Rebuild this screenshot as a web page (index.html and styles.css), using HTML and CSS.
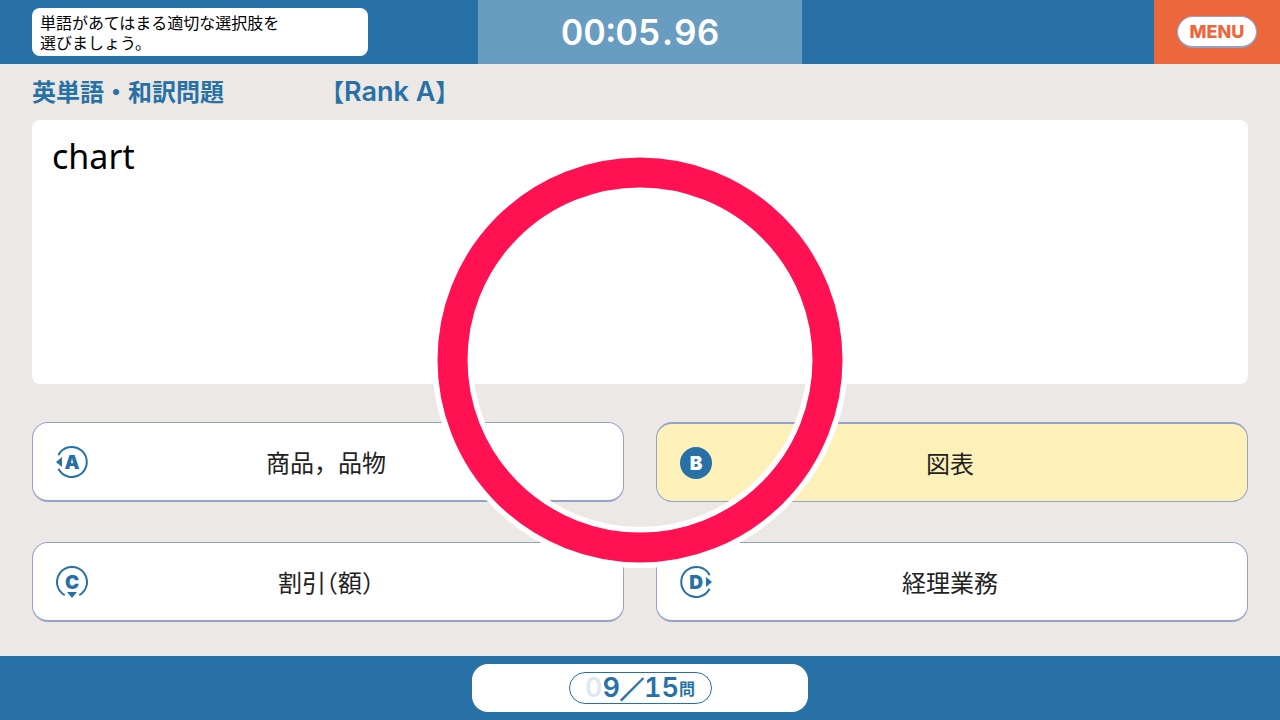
FILE: index.html
```html
<!DOCTYPE html>
<html lang="ja">
<head>
  <meta charset="utf-8">
  <title>英単語・和訳問題</title>
  <meta name="viewport" content="width=device-width, initial-scale=1">
  <link rel="stylesheet" href="styles.css">
</head>
<body>
  <header class="top">
    <div class="top-left">
      <p class="guide">単語があてはまる適切な選択肢を<br>選びましょう。</p>
    </div>
    <div class="timer">00:05<span class="dot">.</span>96</div>
    <div class="menu-box">
      <button class="menu" type="button">MENU</button>
    </div>
  </header>

  <main class="quiz">
    <div class="title">
      <h1>英単語・和訳問題</h1>
      <span class="rank"><span class="half">【</span>Rank A<span class="half">】</span></span>
    </div>
    <div class="question">chart</div>
    <div class="answers">
      <button class="answer" type="button">
        <svg class="key" viewBox="0 0 32 32" aria-hidden="true">
          <path class="arc" d="M2.4 9.2A15 15 0 1 1 2.4 22.8"/>
          <path class="arrow" d="M0 16l6-5v10z"/>
          <text x="16" y="23">A</text>
        </svg>
        <span class="label">商品，品物</span>
      </button>
      <button class="answer selected" type="button">
        <svg class="key" viewBox="0 0 32 32" aria-hidden="true">
          <circle class="disc" cx="16" cy="16" r="16"/>
          <text x="16" y="23">B</text>
        </svg>
        <span class="label">図表</span>
      </button>
      <button class="answer" type="button">
        <svg class="key" viewBox="0 0 32 32" aria-hidden="true">
          <path class="arc" d="M8.8 29.2A15 15 0 1 1 23.2 29.2"/>
          <path class="arrow" d="M11 26h10l-5 6z"/>
          <text x="16" y="23">C</text>
        </svg>
        <span class="label">割引<span class="half">（</span>額<span class="half">）</span></span>
      </button>
      <button class="answer" type="button">
        <svg class="key" viewBox="0 0 32 32" aria-hidden="true">
          <path class="arc" d="M29.6 9.2A15 15 0 1 0 29.6 22.8"/>
          <path class="arrow" d="M32 16l-6-5v10z"/>
          <text x="16" y="23">D</text>
        </svg>
        <span class="label">経理業務</span>
      </button>
    </div>

    <!-- correct answer mark -->
    <svg class="mark" viewBox="0 0 416 416" role="img" aria-label="正解">
      <circle class="mark-shadow" cx="208" cy="208" r="187.5"/>
      <circle class="mark-ring" cx="208" cy="208" r="187.5"/>
    </svg>
  </main>

  <footer class="bottom">
    <div class="progress">
      <div class="count"><span class="zero">0</span><span>9</span><span class="slash">／</span><span>15</span><span class="unit">問</span></div>
    </div>
  </footer>
</body>
</html>
```

FILE: styles.css
```css
* {
  box-sizing: border-box;
}
body {
  margin: 0;
  min-height: 100vh;
  display: flex;
  flex-direction: column;
  background-color: #ece8e5;
  font-family: "Noto Sans CJK JP", sans-serif;
}
button {
  font-family: inherit;
  cursor: pointer;
}

/* header */
.top {
  display: grid;
  grid-template-columns: 1fr 324px 1fr;
  height: 64px;
  background-color: #2871a6;
}
.top-left {
  padding: 8px 0 8px 32px;
}
.guide {
  max-width: 336px;
  height: 48px;
  margin: 0;
  padding: 4px 8px;
  border-radius: 8px;
  background-color: white;
  color: black;
  font-size: 16px;
  line-height: 20px;
}
.timer {
  background-color: #699cc1;
  color: white;
  font-family: Inter, sans-serif;
  font-size: 35px;
  font-weight: 600;
  font-variant-numeric: tabular-nums;
  line-height: 64px;
  text-align: center;
}
.dot {
  padding: 0 2px;
}
.menu-box {
  display: flex;
  justify-content: center;
  align-items: center;
  justify-self: end;
  width: 126px;
  background-color: #ec673c;
}
.menu {
  width: 80px;
  height: 32px;
  padding: 0;
  border: 1px solid #93a3c8;
  border-bottom-width: 2px;
  border-radius: 16px;
  background-color: white;
  color: #ec673c;
  font-family: Inter, sans-serif;
  font-size: 18px;
  font-weight: 800;
}

/* question */
.quiz {
  position: relative;
  flex: 1;
  display: flex;
  flex-direction: column;
  padding: 0 32px 34px;
}
.title {
  display: flex;
  align-items: center;
  gap: 108px;
  height: 56px;
  padding-bottom: 4px;
  color: #2871a6;
}
.title h1 {
  margin: 0;
  font-size: 24px;
  font-weight: 700;
}
.rank {
  font-family: Inter, "Noto Sans CJK JP", sans-serif;
  font-size: 27px;
  font-weight: 600;
}
.half {
  font-feature-settings: "halt";
}
.rank .half {
  font-size: 24px;
  font-weight: 700;
}
.question {
  flex: 1;
  min-height: 264px;
  padding: 12px 20px;
  border-radius: 8px;
  background-color: white;
  color: black;
  font-family: "Noto Sans", sans-serif;
  font-size: 34px;
  line-height: 48px;
}

/* answers */
.answers {
  display: grid;
  grid-template-columns: 1fr 1fr;
  gap: 40px 32px;
  margin-top: 38px;
}
.answer {
  display: grid;
  grid-template-columns: 32px 1fr 32px;
  align-items: center;
  height: 80px;
  padding: 0 27px 0 23px;
  border: 1px solid #93a3c8;
  border-bottom-width: 2px;
  border-radius: 16px;
  background-color: white;
  color: #222;
  font-size: 24px;
}
.selected {
  border-width: 2px 1px 1px;
  background-color: #fdf0b8;
}
.label {
  line-height: 32px;
  text-align: center;
}
.key {
  width: 32px;
  height: 32px;
  fill: #2871a6;
}
.key text {
  font-family: Inter, sans-serif;
  font-size: 19px;
  font-weight: 900;
  text-anchor: middle;
}
.arc {
  fill: none;
  stroke: #2871a6;
  stroke-width: 2;
}
.selected text {
  fill: white;
}

.mark {
  position: absolute;
  top: 50%;
  left: 50%;
  width: 416px;
  height: 416px;
  transform: translate(-50%, -50%);
  pointer-events: none;
}
.mark circle {
  fill: none;
}
.mark-shadow {
  stroke: white;
  stroke-width: 41;
}
.mark-ring {
  stroke: #ff1152;
  stroke-width: 30;
}

/* footer */
.bottom {
  display: flex;
  justify-content: center;
  padding: 8px;
  background-color: #2871a6;
}
.progress {
  display: flex;
  justify-content: center;
  align-items: center;
  width: 336px;
  height: 48px;
  border-radius: 16px;
  background-color: white;
}
.count {
  display: flex;
  justify-content: center;
  align-items: center;
  width: 143px;
  height: 32px;
  border: 1px solid #2871a6;
  border-radius: 16px;
  color: #2871a6;
  font-family: Inter, sans-serif;
  font-size: 27px;
  font-weight: 600;
  font-variant-numeric: tabular-nums;
  line-height: 30px;
}
.zero {
  color: #dfe8f1;
}
.slash {
  font-family: "Noto Sans CJK JP", sans-serif;
  font-size: 24px;
  font-weight: 700;
  -webkit-text-stroke: 1px #2871a6;
}
.unit {
  font-family: "Noto Sans CJK JP", sans-serif;
  font-size: 16px;
  font-weight: 700;
}
```
